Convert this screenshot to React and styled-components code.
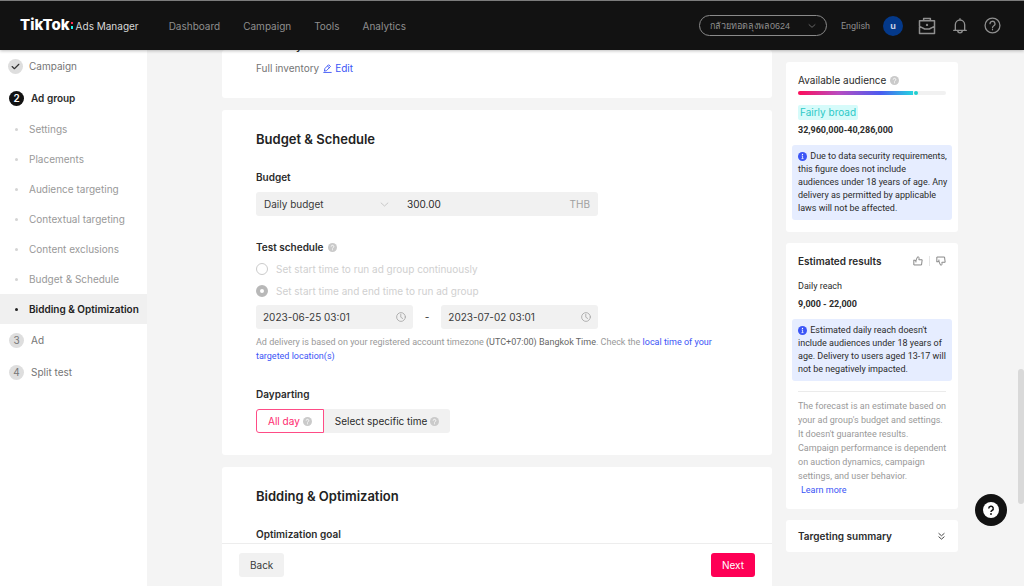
import styled, { createGlobalStyle, css } from "styled-components";

const steps = [
  { label: "Campaign", done: true },
  { label: "Ad group", number: 2, current: true },
];

const subSteps = [
  "Settings",
  "Placements",
  "Audience targeting",
  "Contextual targeting",
  "Content exclusions",
  "Budget & Schedule",
  "Bidding & Optimization",
];

const nextSteps = [
  { label: "Ad", number: 3 },
  { label: "Split test", number: 4 },
];

// Icons
const Icon = ({ size = 16, stroke = 1.5, children }) => (
  <svg
    width={size}
    height={size}
    viewBox="0 0 24 24"
    fill="none"
    stroke="currentColor"
    strokeWidth={stroke}
    strokeLinecap="round"
    strokeLinejoin="round"
    aria-hidden="true"
  >
    {children}
  </svg>
);

const HelpDot = () => (
  <Hint>
    <svg width="9" height="9" viewBox="0 0 18 18" aria-hidden="true">
      <circle cx="9" cy="9" r="9" fill="#cacaca" />
      <path
        d="M6.4 7.2a2.6 2.6 0 1 1 3.8 2.3c-.9.5-1.2.9-1.2 1.7"
        fill="none"
        stroke="#fff"
        strokeWidth="1.7"
      />
      <circle cx="9" cy="13.6" r="1.1" fill="#fff" />
    </svg>
  </Hint>
);

const InfoDot = () => (
  <svg width="9" height="9" viewBox="0 0 18 18" aria-hidden="true">
    <circle cx="9" cy="9" r="9" fill="#3b55f6" />
    <circle cx="9" cy="5" r="1.3" fill="#fff" />
    <path d="M7.4 8h1.8v5M7 13.2h4" fill="none" stroke="#fff" strokeWidth="1.5" />
  </svg>
);

const Chevron = ({ size }) => (
  <Icon size={size} stroke={2}>
    <path d="M3 8l9 8 9-8" />
  </Icon>
);

const Clock = () => (
  <Icon size={10} stroke={2}>
    <circle cx="12" cy="12" r="10.5" />
    <path d="M11.5 5.5v7l4.5 3" />
  </Icon>
);

const Thumb = () => (
  <Icon size={10} stroke={2.4}>
    <path d="M7 10.500L11 2c3 0 4 1.500 3.500 4L14 9h8l-1.500 12.500H2v-11zM7 10.500v4" />
  </Icon>
);

const App = () => {
  return (
    <Page>
      <GlobalStyle />
      <Header>
        <Brand href="#">
          <Logo>
            TikTok
            <svg width="4" height="9" viewBox="0 0 4 9" aria-hidden="true">
              <rect x="1" y="1" width="2" height="2" fill="#fe2c55" />
              <rect x="1" y="5" width="2" height="3" fill="#25f4ee" />
            </svg>
          </Logo>
          Ads Manager
        </Brand>
        <Nav>
          <a href="#">Dashboard</a>
          <a href="#">Campaign</a>
          <a href="#">Tools</a>
          <a href="#">Analytics</a>
        </Nav>
        <Account>
          <select aria-label="Account">
            <option>กล้วยทอดลุงพล0624</option>
          </select>
          <Chevron size={8} />
        </Account>
        <Language>English</Language>
        <Avatar>u</Avatar>
        <Tools>
          <button aria-label="Business center">
            <Icon size={18} stroke={2}>
              <path d="M7.500 5V2h9v3M2 5h20v17H2zM2 12.500l7 3.500h6l7-3.500" />
              <circle cx="12" cy="10.500" r=".6" />
            </Icon>
          </button>
          <button aria-label="Notifications">
            <Icon size={16} stroke={2}>
              <path d="M2.500 18.500h19M5 18.500V10a7 7 0 0 1 14 0v8.500M8.500 18.500c0 5 7 5 7 0M12 2.500V1" />
            </Icon>
          </button>
          <button aria-label="Help">
            <Icon size={17} stroke={1.8}>
              <circle cx="12" cy="12" r="10.500" />
              <path d="M8.500 9.500a3.500 3.500 0 1 1 5 3.200c-1 .6-1.500 1-1.500 2.300M12 17.500v.5" />
            </Icon>
          </button>
        </Tools>
      </Header>

      <Body>
        <Sidebar>
          {steps.map((step) => (
            <Step key={step.label} href="#" $current={step.current} $done={step.done}>
              <StepBadge $current={step.current}>
                {step.done ? (
                  <Icon size={9} stroke={3}>
                    <path d="M3 12l6 6L21 6" />
                  </Icon>
                ) : (
                  step.number
                )}
              </StepBadge>
              {step.label}
            </Step>
          ))}
          {subSteps.map((label) => (
            <SubStep key={label} href="#" $active={label === "Bidding & Optimization"}>
              <Bullet />
              {label}
            </SubStep>
          ))}
          {nextSteps.map((step) => (
            <Step key={step.label} href="#">
              <StepBadge>{step.number}</StepBadge>
              {step.label}
            </Step>
          ))}
        </Sidebar>

        <Content>
          <Main>
            <Scroll>
              <ClippedCard>
                <Label as="h3">Inventory filter</Label>
                <Inventory>
                  Full inventory
                  <a href="#">
                    <Icon size={9} stroke={2.4}>
                      <path d="M4 18l1-6L15 2l5 4.500L10 17zM2 22.500h20M12 5.500l4.500 4" />
                    </Icon>
                    Edit
                  </a>
                </Inventory>
              </ClippedCard>

              <Card>
                <Title>Budget &amp; Schedule</Title>
                <Field>
                  <Label htmlFor="budget">Budget</Label>
                  <BudgetBox>
                    <BudgetType>
                      <select aria-label="Budget type">
                        <option>Daily budget</option>
                      </select>
                      <Chevron size={9} />
                    </BudgetType>
                    <input id="budget" defaultValue="300.00" />
                    <span>THB</span>
                  </BudgetBox>
                </Field>
                <Field>
                  <Label as="h3">
                    Test schedule
                    <HelpDot />
                  </Label>
                  <Radio>
                    <input type="radio" name="schedule" disabled />
                    Set start time to run ad group continuously
                  </Radio>
                  <Radio>
                    <input type="radio" name="schedule" disabled defaultChecked />
                    Set start time and end time to run ad group
                  </Radio>
                  <Dates>
                    <DateBox>
                      <input aria-label="Start time" defaultValue="2023-06-25 03:01" />
                      <Clock />
                    </DateBox>
                    -
                    <DateBox>
                      <input aria-label="End time" defaultValue="2023-07-02 03:01" />
                      <Clock />
                    </DateBox>
                  </Dates>
                  <Note>
                    Ad delivery is based on your registered account timezone{" "}
                    <b>(UTC+07:00) Bangkok Time</b>. Check the{" "}
                    <a href="#">local time of your targeted location(s)</a>
                  </Note>
                </Field>
                <Field>
                  <Label as="h3">Dayparting</Label>
                  <Segments>
                    <Segment $active aria-pressed="true">
                      All day
                      <HelpDot />
                    </Segment>
                    <Segment aria-pressed="false">
                      Select specific time
                      <HelpDot />
                    </Segment>
                  </Segments>
                </Field>
              </Card>

              <Card>
                <Title>Bidding &amp; Optimization</Title>
                <Field>
                  <Label as="h3">Optimization goal</Label>
                </Field>
              </Card>
            </Scroll>
            <Footer>
              <Button>Back</Button>
              <Button $primary>Next</Button>
            </Footer>
          </Main>

          <Aside>
            <Panel>
              <PanelText>
                Available audience
                <HelpDot />
              </PanelText>
              <Meter>
                <MeterFill />
                <MeterDot />
              </Meter>
              <Tag>Fairly broad</Tag>
              <Figure>32,960,000-40,286,000</Figure>
              <Info>
                <InfoDot /> Due to data security requirements, this figure does
                not include audiences under 18 years of age. Any delivery as
                permitted by applicable laws will not be affected.
              </Info>
            </Panel>

            <Panel>
              <PanelHead>
                <PanelTitle>Estimated results</PanelTitle>
                <Votes>
                  <button aria-label="Helpful">
                    <Thumb />
                  </button>
                  <button aria-label="Not helpful">
                    <Thumb />
                  </button>
                </Votes>
              </PanelHead>
              <Reach>Daily reach</Reach>
              <Figure>9,000 - 22,000</Figure>
              <Info>
                <InfoDot /> Estimated daily reach doesn't include audiences under
                18 years of age. Delivery to users aged 13-17 will not be
                negatively impacted.
              </Info>
              <Divider />
              <Forecast>
                The forecast is an estimate based on your ad group's budget and
                settings. It doesn't guarantee results. Campaign performance is
                dependent on auction dynamics, campaign settings, and user
                behavior.
                <a href="#">Learn more</a>
              </Forecast>
            </Panel>

            <Panel $compact>
              <PanelHead>
                <PanelTitle>Targeting summary</PanelTitle>
                <Toggle aria-label="Expand targeting summary">
                  <Icon size={9} stroke={2.6}>
                    <path d="M5 4l7 6 7-6M5 13l7 6 7-6" />
                  </Icon>
                </Toggle>
              </PanelHead>
            </Panel>
          </Aside>
        </Content>
      </Body>

      <ScrollThumb />
      <HelpButton aria-label="Support">
        <svg width="16" height="16" viewBox="0 0 32 32" aria-hidden="true">
          <circle cx="16" cy="16" r="16" fill="#fff" />
          <path
            d="M11.500 13a4.500 4.500 0 1 1 6.500 4c-1.500.8-2 1.500-2 3"
            fill="none"
            stroke="#121212"
            strokeWidth="3"
          />
          <circle cx="16" cy="24" r="1.900" fill="#121212" />
        </svg>
      </HelpButton>
    </Page>
  );
};

// Styled Components
const GlobalStyle = createGlobalStyle`
  * {
    box-sizing: border-box;
  }
  body {
    margin: 0;
    background: #f4f4f4;
    color: #2b2b2b;
    font: 10px/16px Inter, "Liberation Sans", sans-serif;
  }
  h2, h3, p {
    margin: 0;
  }
  a {
    color: #3b55f6;
    text-decoration: none;
  }
  button, input, select {
    margin: 0;
    padding: 0;
    border: 0;
    background: none;
    color: inherit;
    font: inherit;
  }
  select {
    appearance: none;
  }
  svg {
    flex: none;
  }
`;

const Page = styled.div`
  height: 100vh;
  display: flex;
  flex-direction: column;
  overflow: hidden;
`;

const Header = styled.header`
  flex: none;
  height: 50px;
  display: flex;
  align-items: center;
  padding: 0 23px 0 20px;
  border-top: 1px solid #7c7c7c;
  background: #121212;
  color: #8f8f8f;
  box-shadow: 0 1px 3px rgba(0, 0, 0, 0.25);
  z-index: 1;
`;

const Brand = styled.a`
  display: flex;
  align-items: baseline;
  gap: 2px;
  color: #d8d8d8;
`;

const Logo = styled.span`
  color: #fff;
  font-size: 15px;
  font-weight: 800;
`;

const Nav = styled.nav`
  flex: 1;
  display: flex;
  gap: 23px;
  margin-left: 30px;

  a {
    color: inherit;
  }
`;

const Account = styled.div`
  width: 128px;
  height: 21px;
  display: flex;
  align-items: center;
  padding: 0 10px;
  border: 1px solid #8a8a8a;
  border-radius: 11px;
  font-family: "Liberation Sans", sans-serif;
  font-size: 9px;

  select {
    flex: 1;
    min-width: 0;
  }
`;

const Language = styled.span`
  margin: 0 13px 0 14px;
  font-family: Roboto, sans-serif;
  font-size: 9px;
`;

const Avatar = styled.span`
  width: 20px;
  height: 20px;
  border-radius: 50%;
  background: #04398a;
  color: #c9d3e4;
  font-size: 9px;
  font-weight: bold;
  line-height: 20px;
  text-align: center;
`;

const Tools = styled.div`
  display: flex;
  align-items: center;
  gap: 16px;
  margin-left: 15px;

  button {
    display: flex;
  }
`;

const Body = styled.div`
  flex: 1;
  min-height: 0;
  display: flex;
`;

const Sidebar = styled.nav`
  flex: none;
  width: 147px;
  background: #fff;
`;

const Step = styled.a`
  height: 32px;
  display: flex;
  align-items: center;
  gap: ${({ $done }) => ($done ? 6 : 7)}px;
  padding-left: ${({ $done }) => ($done ? 8 : 9)}px;
  color: ${({ $current }) => ($current ? "#2b2b2b" : "#757575")};
  font-weight: ${({ $current }) => ($current ? 600 : 400)};
`;

const StepBadge = styled.span`
  width: 15px;
  height: 15px;
  display: flex;
  align-items: center;
  justify-content: center;
  border-radius: 50%;
  background: ${({ $current }) => ($current ? "#121212" : "#dedede")};
  color: ${({ $current }) => ($current ? "#fff" : "#777")};

  svg {
    color: #333;
  }
`;

const Bullet = styled.span`
  width: 3px;
  height: 3px;
  border-radius: 50%;
  background: #d4d4d4;
`;

const SubStep = styled.a`
  height: 30px;
  display: flex;
  align-items: center;
  gap: 11px;
  padding-left: 15px;
  color: #999;

  ${({ $active }) =>
    $active &&
    css`
      background: #f0f0f0;
      color: #222;
      font-weight: 600;

      ${Bullet} {
        background: #222;
      }
    `}
`;

const Content = styled.div`
  flex: 1;
  min-width: 0;
  display: flex;
  gap: 14px;
  padding: 0 66px 0 75px;
`;

const Main = styled.main`
  flex: 1;
  min-width: 0;
  display: flex;
  flex-direction: column;
`;

const Scroll = styled.div`
  flex: 1;
  min-height: 0;
  display: flex;
  flex-direction: column;
  gap: 12px;
  overflow: hidden;
`;

const Card = styled.section`
  flex: none;
  padding: 19px 34px 22px;
  border-radius: 3px;
  background: #fff;
`;

const ClippedCard = styled(Card)`
  height: 48px;
  display: flex;
  flex-direction: column;
  justify-content: flex-end;
  gap: 6px;
  overflow: hidden;
`;

const Inventory = styled.p`
  display: flex;
  gap: 4px;
  color: #757575;

  a {
    display: flex;
    align-items: center;
    gap: 3px;
  }
`;

const Title = styled.h2`
  color: #222;
  font-size: 13px;
  font-weight: 600;
  line-height: 20px;
`;

const Field = styled.div`
  & + & {
    margin-top: 23px;
  }
  ${Title} + & {
    margin-top: 20px;
  }
`;

const Label = styled.label`
  display: flex;
  align-items: center;
  gap: 4px;
  font-size: 10px;
  font-weight: 600;
  line-height: 16px;
`;

const Hint = styled.span`
  display: inline-flex;
`;

const BudgetBox = styled.div`
  max-width: 342px;
  height: 24px;
  display: flex;
  align-items: center;
  margin-top: 7px;
  padding: 0 8px;
  border-radius: 3px;
  background: #f1f1f1;

  input {
    flex: 1;
    min-width: 0;
  }
  span {
    color: #a0a0a0;
  }
`;

const BudgetType = styled.div`
  width: 143px;
  display: flex;
  align-items: center;
  padding-right: 18px;
  color: #bbb;

  select {
    flex: 1;
    color: #3a3a3a;
  }
`;

const Radio = styled.label`
  display: flex;
  align-items: center;
  gap: 8px;
  margin-top: 6px;
  color: #d0d0d0;

  input {
    width: 12px;
    height: 12px;
    appearance: none;
    border: 1px solid #cbcbcb;
    border-radius: 50%;
  }
  input:checked {
    border: 4px solid #b8b8b8;
  }
`;

const Dates = styled.div`
  max-width: 342px;
  display: flex;
  align-items: center;
  gap: 12px;
  margin-top: 6px;
`;

const DateBox = styled.div`
  flex: 1;
  min-width: 0;
  height: 24px;
  display: flex;
  align-items: center;
  padding: 0 7px;
  border-radius: 3px;
  background: #f1f1f1;
  color: #a5a5a5;

  input {
    flex: 1;
    min-width: 0;
    color: #3a3a3a;
  }
`;

const Note = styled.p`
  max-width: 460px;
  margin-top: 6px;
  color: #999;
  font-family: Roboto, sans-serif;
  font-size: 9px;
  line-height: 14px;

  b {
    color: #666;
    font-weight: normal;
  }
`;

const Segments = styled.div`
  display: flex;
  margin-top: 7px;
`;

const Segment = styled.button`
  height: 24px;
  display: flex;
  align-items: center;
  gap: 3px;
  padding: 0 11px;
  border-radius: 0 3px 3px 0;
  background: #f1f1f1;

  ${({ $active }) =>
    $active &&
    css`
      border: 1px solid #fe4c86;
      border-radius: 3px 0 0 3px;
      background: #fff;
      color: #fe2a6e;
    `}
`;

const Footer = styled.footer`
  flex: none;
  height: 43px;
  display: flex;
  align-items: center;
  justify-content: space-between;
  padding: 0 17px;
  border-top: 1px solid #ededed;
  background: #fff;
`;

const Button = styled.button`
  height: 24px;
  padding: 0 11px;
  border-radius: 3px;
  background: ${({ $primary }) => ($primary ? "#fe0055" : "#f1f1f1")};
  color: ${({ $primary }) => ($primary ? "#fff" : "#3a3a3a")};
`;

const Aside = styled.aside`
  flex: none;
  width: 172px;
  display: flex;
  flex-direction: column;
  gap: 11px;
  padding-top: 12px;
`;

const Panel = styled.section`
  padding: ${({ $compact }) => ($compact ? "8px 12px" : "10px 12px 12px")};
  border-radius: 3px;
  background: #fff;
`;

const PanelText = styled.p`
  display: flex;
  align-items: center;
  gap: 4px;
`;

const Meter = styled.div`
  height: 4px;
  display: flex;
  align-items: center;
  gap: 1px;
  margin-top: 3px;
  border-radius: 2px;
  background: #f1f1f1;
`;

const MeterFill = styled.span`
  width: 78%;
  height: 4px;
  border-radius: 2px 0 0 2px;
  background: linear-gradient(90deg, #fe0d5a, #b94cc0 35%, #4a5cf0 72%, #25d4e0);
`;

const MeterDot = styled.span`
  width: 4px;
  height: 4px;
  border-radius: 50%;
  background: #20cfcf;
`;

const Tag = styled.span`
  display: inline-block;
  margin-top: 10px;
  padding: 0 2px;
  border-radius: 2px;
  background: #d6fbfa;
  color: #2cc9c7;
  line-height: 15px;
`;

const Figure = styled.p`
  margin-top: 2px;
  font-family: Roboto, sans-serif;
  font-size: 9px;
  font-weight: bold;
`;

const Info = styled.p`
  margin: 7px -6px 0;
  padding: 5px 4px 5px 6px;
  border-radius: 3px;
  background: #e6edff;
  font-family: Roboto, sans-serif;
  font-size: 9px;
  line-height: 13px;

  svg {
    margin-right: 1px;
    vertical-align: -2px;
  }
`;

const PanelHead = styled.div`
  display: flex;
  align-items: center;
  justify-content: space-between;
`;

const PanelTitle = styled.h2`
  font-size: 10px;
  font-weight: 600;
`;

const Votes = styled.div`
  display: flex;
  color: #888;

  button {
    display: flex;
  }
  button + button {
    margin-left: 6px;
    padding-left: 6px;
    border-left: 1px solid #e5e5e5;
  }
  button + button svg {
    transform: scaleY(-1);
  }
`;

const Reach = styled.p`
  margin-top: 9px;
  font-family: Roboto, sans-serif;
  font-size: 9px;
`;

const Divider = styled.hr`
  margin: 10px 0 7px;
  border: 0;
  border-top: 1px solid #ebebeb;
`;

const Forecast = styled.p`
  margin-right: -3px;
  color: #999;
  font-family: Roboto, sans-serif;
  font-size: 9px;
  line-height: 14px;

  a {
    display: block;
    padding-left: 3px;
  }
`;

const Toggle = styled.button`
  display: flex;
  color: #444;
`;

const ScrollThumb = styled.span`
  position: fixed;
  right: 0;
  top: 369px;
  width: 6px;
  height: 135px;
  border-radius: 3px;
  background: #d9d9d9;
`;

const HelpButton = styled.button`
  position: fixed;
  right: 17px;
  bottom: 60px;
  width: 32px;
  height: 32px;
  display: flex;
  align-items: center;
  justify-content: center;
  border-radius: 50%;
  background: #121212;
`;

export default App;
